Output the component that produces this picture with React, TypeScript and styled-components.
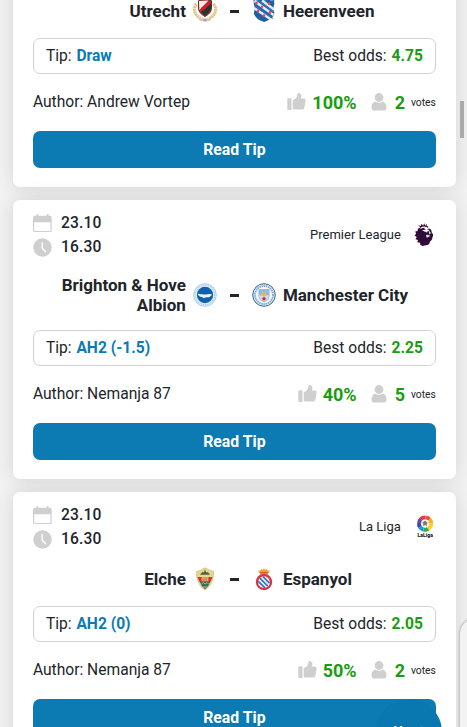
import { FC, ReactNode } from 'react';
import styled, { createGlobalStyle } from 'styled-components';

interface Team {
  name: string;
  logo: ReactNode;
}

interface TipCardProps {
  date?: string;
  time?: string;
  league?: { name: string; logo: ReactNode };
  home: Team;
  away: Team;
  tip: string;
  odds: string;
  author: string;
  rating: string;
  votes: number;
}

const CalendarIcon = () => (
  <Icon width="19" height="18" viewBox="0 0 19 18">
    <path d="M3.5 0h1.8v1.8h8.4V0h1.8v1.8H17A1.7 1.7 0 0 1 18.7 3.5v13A1.5 1.5 0 0 1 17.2 18H1.5A1.5 1.5 0 0 1 0 16.5v-13A1.7 1.7 0 0 1 1.7 1.8h1.8zM1.2 8.2v8.1c0 .4.2.6.6.6h15.1c.4 0 .6-.2.6-.6V8.2z" />
  </Icon>
);

const ClockIcon = () => (
  <Icon width="19" height="19" viewBox="0 0 19 19">
    <circle cx="9.5" cy="9.5" r="9.2" />
    <path d="M9.2 4.2v6l3.8 3.9" fill="none" stroke="#fff" strokeWidth="1.4" />
  </Icon>
);

const ThumbIcon = () => (
  <Icon width="19" height="18" viewBox="0 0 19 18">
    <rect x="0.3" y="5.2" width="4.2" height="11.8" rx="0.8" />
    <path d="M5.7 7.6 9 4.9c.9-.9.8-2.1 1.3-3.5.4-1.2 1.5-1.6 2.7-1 1.7.9 1.7 2.9.8 5h3c1.2 0 2 1 1.8 2.1l-1.2 7.3c-.2 1.1-1 1.8-2.2 1.8H8.500c-1.100 0-2-.2-2.800-.9z" />
  </Icon>
);

const UserIcon = () => (
  <Icon width="16" height="18" viewBox="0 0 16 18">
    <circle cx="8" cy="4.5" r="4.4" />
    <path d="M4.2 8.500c2.200 1.800 5.400 1.800 7.600 0 2.200.8 3.600 2.600 3.600 5.200v1.400c0 1.400-.9 2.300-2.300 2.300H2.900c-1.400 0-2.300-.9-2.300-2.300v-1.400c0-2.600 1.400-4.400 3.600-5.200z" />
  </Icon>
);

const UtrechtLogo = () => (
  <svg width="24" height="24" viewBox="0 0 24 24">
    <path d="M3.500 5C-.7 10 1.500 17.500 9.500 20M20.500 5c4.200 5 2 12.500-6 15" fill="none" stroke="#e2bd85" strokeWidth="3" strokeDasharray="2 .6" />
    <path d="M5.500 1.700Q12-.2 18.500 1.700V9c0 4-3 6.500-6.500 8.500C8.500 15.500 5.500 13 5.500 9z" fill="#c91f2b" stroke="#5d352b" />
    <path d="m6 2 9.500-.4L6.300 11z" fill="#f7eeeb" />
    <path d="m17.900 3 .1 6c-1 4-3 5.500-6 7.600-1.700-.9-3-2-4-3.300z" fill="#22382f" />
    <path d="m8 9 9-7 .8 2.500L10 12z" fill="#d41c2c" />
    <path d="M6.500 21h4m3 0h4" stroke="#d9b99a" strokeWidth="1.500" />
    <path d="M10.200 19.500h3.600v3h-3.600z" fill="#aaa9b2" />
  </svg>
);

const HeerenveenLogo = () => (
  <svg width="24" height="24" viewBox="0 0 24 24">
    <path d="M1.500 1Q5 2 8 .5q4 1.500 8 0 3 1.500 6.300.5-.5 2.500.1 4-1.800 4 0 9-1 6-10.200 9Q3 20.500 1.800 14q1.600-5 0-9z" fill="#1c5fa4" />
    <path d="m2.500 2 19 14M2 9l17 11.500M10 1.500l12 9" stroke="#e6edf8" strokeWidth="2.500" />
    <path d="m2.200 6 18.500 13.500M6 1.500 22 13" stroke="#3676b6" strokeWidth="1.200" />
    <g fill="#e44765">
      <circle cx="4.500" cy="4" r="1.400" />
      <circle cx="17" cy="4.700" r="1.400" />
      <circle cx="10" cy="7.700" r="1.300" />
      <circle cx="18" cy="13.500" r="1.400" />
      <circle cx="6" cy="12" r="1.400" />
      <circle cx="12" cy="16.700" r="1.400" />
    </g>
  </svg>
);

const BrightonLogo = () => (
  <svg width="24" height="24" viewBox="0 0 24 24">
    <circle cx="12" cy="12" r="11.300" fill="#e7f2fb" stroke="#a5cbea" />
    <circle cx="12" cy="12" r="9.700" fill="none" stroke="#a9cbe9" strokeWidth="1.300" strokeDasharray="1 .8" />
    <circle cx="12" cy="12" r="8.200" fill="#1160ac" />
    <path d="M4.300 10.600c3 .8 5.200.9 8 .8 2.500-.1 4-.9 5.700-.2l1.500.9-1.600.4c-.7 1.800-2.600 2.100-4.700 1.700l-3 1-1-1.200c-2.300.1-3.800-.9-4.900-3.400z" fill="#e8f3ff" />
  </svg>
);

const ManCityLogo = () => (
  <svg width="24" height="24" viewBox="0 0 24 24">
    <circle cx="12" cy="12" r="11.300" fill="#d7e8f4" stroke="#3f6696" />
    <circle cx="12" cy="12" r="9" fill="#f4f6f8" stroke="#89a9ca" strokeWidth="1.800" strokeDasharray="1.500 .7" />
    <path d="M6.500 6h11v6.500c0 3.500-2.200 5.300-5.500 6.800-3.300-1.500-5.500-3.300-5.500-6.800z" fill="#8cbde2" />
    <path d="M7 12.500h10c-.1 3-2.200 4.800-5 6.100-2.800-1.300-4.900-3.100-5-6.100z" fill="#d7dce0" />
    <path d="M8.500 10.500h7l-1.500 2h-4zM10 8h1v3h-1zm3 0h1v3h-1z" fill="#e9b752" />
    <path d="m12 13.300.8 1.500 1.600.2-1.200 1.100.3 1.700-1.500-.8-1.500.8.300-1.700-1.200-1.100 1.600-.2z" fill="#be3044" />
  </svg>
);

const ElcheLogo = () => (
  <svg width="24" height="24" viewBox="0 0 24 24">
    <path d="M3.500 4.500Q8 3.500 12 .7q4 2.800 8.500 3.800.5 5-1.500 9.500-1.800 6-7 9.200Q6.800 20 5 14 3 9.500 3.500 4.500z" fill="#e7d594" stroke="#d9cb88" />
    <path d="M4.500 10h15l-2 5h-11z" fill="#dc3428" />
    <path d="m7 7.700 2-2.400h2l1-3 1 3h2l2 2.400z" fill="#53603d" />
    <path d="M8.500 10h7v4.500h-7z" fill="#e9a34f" />
    <path d="M10 10.500h4V14h-4z" fill="#c99572" />
    <path d="M6.700 14.500h10.600q-1.500 5-5.300 7.700-3.800-2.700-5.300-7.700z" fill="#3f685b" />
    <path d="m8.500 17 2-1.500 1.500 1.600 2-1.600 1.500 1.500M10 20h4" fill="none" stroke="#b2c19c" strokeWidth=".9" />
  </svg>
);

const EspanyolLogo = () => (
  <svg width="24" height="24" viewBox="0 0 24 24">
    <path d="m7 6-.8-3 2 1L9.500 1.800 11 3l1-2 1 2 1.500-1.200L15.800 4l2-1L17 6z" fill="#e8a42c" />
    <path d="M8 5.200h8v1.500H8z" fill="#d7502d" />
    <circle cx="12" cy="15" r="8.200" fill="#d83444" />
    <circle cx="12" cy="15.200" r="5.900" fill="#f3f4fa" />
    <path d="m7.800 11.200 8 8M11 9.700l6.500 6.500M6.300 14.300l6.700 6.600" stroke="#3971bb" strokeWidth="1.700" />
  </svg>
);

const PremierLeagueLogo = () => (
  <svg width="24" height="24" viewBox="0 0 24 24">
    <path d="m7.200 4.600-1.700-2.300 2.300.8L8.500.7l1.600 2L11.200.2l1.100 2.500L14 .8l-.3 2.500 1.700-.4-.8 1.800 3 1.500c1.200 1.300.8 2.500 1.500 4 1.500.9 1.200 2.300.4 3.700-.1 2-1 3.700-2.500 4.500-.2 1.700-1 3.200-3 3.700L9.500 23 7 21.600l.2-1.800-3-.6L5 17l-2.500-.8L3.700 14 1.600 12.500l1.500-1.700-.9-2.400 2.400-.5.3-2.200z" fill="#310b3a" />
    <path d="M7.500 5.500c2.500-1.700 5.700-1.300 7.400.1l-3.300-.2 3.500 2.200-5.400-.1M11 7.900l3.400 1" fill="none" stroke="#fff" strokeWidth="1.200" />
    <path d="m13.500 12 3.300.8-2.900 1.600zM16.400 8.500l1.300 1.700-1.200.8z" fill="#fff" stroke="#fff" strokeWidth=".5" />
  </svg>
);

const LaLigaLogo = () => (
  <svg width="24" height="24" viewBox="0 0 24 24">
    <g fill="none" strokeWidth="4.200">
      <path d="M6.300 8a6 6 0 0 1 1.500-3.800" stroke="#7048a2" />
      <path d="M7.800 4.200A6 6 0 0 1 12 2.500" stroke="#ec3445" />
      <path d="M12.300 2.500a6 6 0 0 1 4.200 1.900" stroke="#f05033" />
      <path d="M16.500 4.400A6 6 0 0 1 18 8.500" stroke="#ffac19" />
      <path d="M18 8.500a6 6 0 0 1-3 5.200" stroke="#ffd11b" />
      <path d="M15 13.700a6 6 0 0 1-4.500.7" stroke="#36a652" />
      <path d="M10.500 14.400A6 6 0 0 1 7 12" stroke="#159cd8" />
      <path d="M7 12a6 6 0 0 1-.7-4" stroke="#3448b2" />
    </g>
    <circle cx="12.100" cy="8.500" r="4" fill="#fff" />
    <path d="m12 6 2 1.500-.7 2.500h-2.600L10 7.500zM8.500 7.500l1 .5m5 0 1-.5M10.700 10l-.8 1.200m3.400-1.200.8 1.200" fill="#777" stroke="#777" strokeWidth=".7" />
    <LeagueWord x="12.200" y="22" textAnchor="middle">LaLiga</LeagueWord>
  </svg>
);

const tips: TipCardProps[] = [
  {
    home: { name: 'Utrecht', logo: <UtrechtLogo /> },
    away: { name: 'Heerenveen', logo: <HeerenveenLogo /> },
    tip: 'Draw',
    odds: '4.75',
    author: 'Andrew Vortep',
    rating: '100%',
    votes: 2,
  },
  {
    date: '23.10',
    time: '16.30',
    league: { name: 'Premier League', logo: <PremierLeagueLogo /> },
    home: { name: 'Brighton & Hove Albion', logo: <BrightonLogo /> },
    away: { name: 'Manchester City', logo: <ManCityLogo /> },
    tip: 'AH2 (-1.5)',
    odds: '2.25',
    author: 'Nemanja 87',
    rating: '40%',
    votes: 5,
  },
  {
    date: '23.10',
    time: '16.30',
    league: { name: 'La Liga', logo: <LaLigaLogo /> },
    home: { name: 'Elche', logo: <ElcheLogo /> },
    away: { name: 'Espanyol', logo: <EspanyolLogo /> },
    tip: 'AH2 (0)',
    odds: '2.05',
    author: 'Nemanja 87',
    rating: '50%',
    votes: 2,
  },
];

const TipCard: FC<TipCardProps> = ({ date, time, league, home, away, tip, odds, author, rating, votes }) => (
  <Card>
    <CardHeader>
      {date && (
        <Schedule>
          <ScheduleRow><CalendarIcon />{date}</ScheduleRow>
          <ScheduleRow><ClockIcon />{time}</ScheduleRow>
        </Schedule>
      )}
      {league && <League>{league.name}{league.logo}</League>}
    </CardHeader>
    <Match>
      <TeamName $align="right">{home.name}</TeamName>
      {home.logo}
      <Dash />
      {away.logo}
      <TeamName $align="left">{away.name}</TeamName>
    </Match>
    <TipBox>
      <span>Tip: <Pick>{tip}</Pick></span>
      <span>Best odds: <Odds>{odds}</Odds></span>
    </TipBox>
    <Info>
      <span>Author: {author}</span>
      <Stats>
        <ThumbIcon />
        <Score $left={6} $right={14}>{rating}</Score>
        <UserIcon />
        <Score $left={8} $right={6}>{votes}</Score>
        <Votes>votes</Votes>
      </Stats>
    </Info>
    <ReadButton type="button">Read Tip</ReadButton>
  </Card>
);

const App = () => (
  <Page>
    <GlobalStyle />
    <List>
      {tips.map((item) => <TipCard key={item.home.name} {...item} />)}
    </List>
    <ScrollThumb />
    <SidePanel />
    <UpButton>
      Up
      <svg width="12" height="12" viewBox="0 0 12 12">
        <path d="M6 11V2M2 6l4-4 4 4" fill="none" stroke="#fff" strokeWidth="2" />
      </svg>
    </UpButton>
  </Page>
);

const GlobalStyle = createGlobalStyle`
  body {
    margin: 0;
    overflow: hidden;
  }
  * {
    box-sizing: border-box;
  }
  svg {
    display: block;
    flex-shrink: 0;
  }
`;

const Page = styled.div`
  position: relative;
  height: 727px;
  overflow: hidden;
  background-color: #f2f2f2;
  color: #212529;
  font-family: Roboto, 'Liberation Sans', sans-serif;
  font-size: 15.6px;
`;

const List = styled.div`
  display: flex;
  flex-direction: column;
  gap: 13px;
  width: 443px;
  margin: -75.7px 0 0 12.9px;
`;

const Card = styled.div`
  padding: 10px 20px 19.5px;
  background-color: white;
  border-radius: 7px;
  box-shadow: 0 0 20px rgba(0, 0, 0, 0.12);
`;

const CardHeader = styled.div`
  display: flex;
  justify-content: space-between;
  height: 49px;
`;

const Schedule = styled.div`
  display: flex;
  flex-direction: column;
`;

const ScheduleRow = styled.div`
  display: flex;
  align-items: center;
  gap: 9px;
  height: 24.5px;
  font-weight: 500;
  letter-spacing: 0.2px;
`;

const League = styled.div`
  display: flex;
  align-items: center;
  gap: 12px;
  margin-right: -1px;
  font-size: 13px;
`;

const LeagueWord = styled.text`
  font-size: 5.2px;
  font-weight: 900;
  fill: #222;
`;

const Match = styled.div`
  display: grid;
  grid-template-columns: 153px 24px 21px 24px 153px;
  column-gap: 7px;
  align-items: center;
  margin: 15.5px 0;
  line-height: 20px;
`;

const TeamName = styled.div<{ $align: string }>`
  font-size: 17px;
  font-weight: 700;
  text-align: ${({ $align }) => $align};
`;

const Dash = styled.div`
  justify-self: center;
  width: 9px;
  height: 3px;
  margin-top: 1px;
  background-color: #212529;
`;

const TipBox = styled.div`
  display: flex;
  align-items: center;
  justify-content: space-between;
  height: 36px;
  padding: 0 12px;
  border: 1px solid #d2d2d2;
  border-radius: 7px;
`;

const Pick = styled.span`
  margin-left: 1px;
  color: #0c7ab3;
  font-weight: 700;
`;

const Odds = styled.span`
  margin-left: 1px;
  color: #1b9c11;
  font-weight: 700;
`;

const Info = styled.div`
  display: flex;
  align-items: center;
  justify-content: space-between;
  height: 57px;
  padding-bottom: 1px;
`;

const Stats = styled.div`
  display: flex;
  align-items: center;
`;

const Score = styled.span<{ $left: number; $right: number }>`
  margin: 0 ${({ $right }) => $right}px 0 ${({ $left }) => $left}px;
  color: #1b9c11;
  font-size: 18px;
  font-weight: 700;
`;

const Votes = styled.span`
  font-size: 10.3px;
`;

const Icon = styled.svg`
  fill: #cfcfcf;
`;

const ReadButton = styled.button`
  display: block;
  width: 100%;
  height: 36.5px;
  padding: 0 0 1px;
  border: 0;
  border-radius: 7px;
  background-color: #0c7ab3;
  color: white;
  font-family: inherit;
  font-size: 15.8px;
  font-weight: 700;
`;

const ScrollThumb = styled.div`
  position: absolute;
  top: 101px;
  right: 3px;
  width: 4px;
  height: 37px;
  background-color: #aaa;
`;

const SidePanel = styled.div`
  position: absolute;
  top: 618px;
  left: 460px;
  width: 60px;
  height: 160px;
  border-radius: 16px;
  background-color: #f3f3f3;
  box-shadow: 0 0 3px rgba(0, 0, 0, 0.4);
`;

const UpButton = styled.div`
  position: absolute;
  top: 699px;
  left: 376px;
  display: flex;
  align-items: center;
  justify-content: center;
  gap: 5px;
  width: 66px;
  height: 66px;
  padding-left: 3px;
  border-radius: 50%;
  background-color: #0a78b0;
  color: white;
  font-size: 14px;
  font-weight: 500;
`;

export default App;
